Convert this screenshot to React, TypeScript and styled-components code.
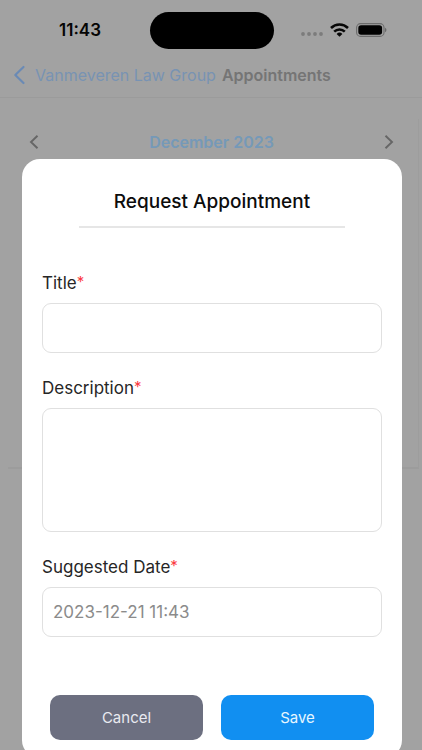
import React from "react";
import styled, { createGlobalStyle } from "styled-components";

const GlobalStyle = createGlobalStyle`
  *, *::before, *::after { box-sizing: border-box; }
  body {
    margin: 0;
    background: #a2a2a2;
    font-family: Inter, "Liberation Sans", sans-serif;
  }
  button, input, textarea { font-family: inherit; }
`;

const Screen = styled.div`
  position: relative;
  height: 100vh;
  overflow: hidden;
  background: #a2a2a2;
`;

const StatusBar = styled.header`
  display: grid;
  grid-template-columns: 1fr 124px 1fr;
  align-items: center;
  height: 54px;
  padding: 6px 0 0 2px;
`;

const Clock = styled.time`
  padding-left: 8px;
  text-align: center;
  font-size: 17px;
  line-height: 24px;
  font-weight: 600;
  color: #050505;
`;

const Island = styled.div`
  height: 37px;
  border-radius: 19px;
  background: #000;
`;

const Indicators = styled.div`
  display: flex;
  align-items: center;
  justify-content: flex-end;
  gap: 7px;
  padding-right: 35px;
`;

const NavBar = styled.nav`
  display: flex;
  align-items: center;
  gap: 6px;
  height: 44px;
  padding: 0 13px 2px;
  border-bottom: 1px solid #9b9b9b;
`;

const BackLink = styled.a`
  display: flex;
  align-items: center;
  gap: 9px;
  font-size: 16px;
  line-height: 24px;
  color: #7893b3;
  text-decoration: none;
  white-space: nowrap;
`;

const NavTitle = styled.h1`
  margin: 0;
  font-size: 16px;
  line-height: 24px;
  font-weight: 600;
  color: #757575;
`;

const CalendarCard = styled.section`
  height: 350px;
  margin: 21px 3px 0 8px;
  border-right: 1px solid #9d9d9d;
  border-bottom: 2px solid #9c9c9c;
`;

const MonthRow = styled.div`
  display: flex;
  align-items: center;
  justify-content: space-between;
  height: 46px;
  padding: 0 23px 0 20px;
`;

const MonthName = styled.h2`
  margin: 0;
  font-size: 16px;
  line-height: 24px;
  font-weight: 600;
  color: #7599b8;
`;

const IconButton = styled.button`
  display: flex;
  padding: 0;
  border: 0;
  background: none;
  color: #666;
`;

const Overlay = styled.div`
  position: absolute;
  inset: 0;
  padding: 159px 20px 0 22px;
`;

const Dialog = styled.form`
  padding: 30px 20px 18px;
  border-radius: 18px;
  background: #fff;
`;

const DialogTitle = styled.h2`
  margin: 0 37px 42px;
  padding-bottom: 11px;
  border-bottom: 2px solid #e6e6e6;
  text-align: center;
  font-size: 19px;
  line-height: 26px;
  font-weight: 500;
  color: #0c0c0c;
  white-space: nowrap;
`;

const Field = styled.div`
  display: flex;
  flex-direction: column;
  gap: 7px;
  margin-bottom: 22px;
`;

const Label = styled.label`
  font-size: 17px;
  line-height: 26px;
  color: #262626;
`;

const Required = styled.span`
  font-size: 15px;
  line-height: 15px;
  vertical-align: 2px;
  color: #fb3b42;
`;

const TextInput = styled.input`
  width: 100%;
  height: 50px;
  padding: 0 10px;
  border: 1px solid #e0e0e0;
  border-radius: 9px;
  background: #fff;
  font-size: 17px;
  color: #8b8b8b;
  outline: none;
`;

const TextArea = styled.textarea`
  width: 100%;
  height: 124px;
  padding: 10px;
  border: 1px solid #e0e0e0;
  border-radius: 9px;
  background: #fff;
  font-size: 17px;
  color: #262626;
  outline: none;
  resize: none;
`;

const Actions = styled.div`
  display: grid;
  grid-template-columns: 1fr 1fr;
  gap: 18px;
  padding: 36px 8px 0;
`;

const ActionButton = styled.button<{ $primary?: boolean }>`
  height: 45px;
  padding: 0;
  border: 0;
  border-radius: 10px;
  background: ${(p) => (p.$primary ? "#118ff1" : "#6c6f80")};
  color: ${(p) => (p.$primary ? "#e6f6ff" : "#e9eaf0")};
  font-size: 15px;
`;

const Signal = () => (
  <svg width="22" height="14" viewBox="0 0 22 14" fill="#7c7c7c" aria-hidden="true">
    <circle cx="2" cy="11" r="1.9" />
    <circle cx="8" cy="11" r="1.9" />
    <circle cx="14" cy="11" r="1.9" />
    <circle cx="20" cy="11" r="1.9" />
  </svg>
);

const Wifi = () => (
  <svg width="19" height="14" viewBox="0 0 19 14" fill="none" stroke="#080808" strokeWidth="2.6" aria-hidden="true">
    <path d="M1 5a12.2 12.2 0 0 1 17 0" />
    <path d="M4.2 8.6a7.6 7.6 0 0 1 10.6 0" />
    <path d="M9.5 13.8 6.6 10.9a4.2 4.2 0 0 1 5.8 0z" fill="#080808" stroke="none" />
  </svg>
);

const Battery = () => (
  <svg width="31" height="14" viewBox="0 0 31 14" fill="none" aria-hidden="true">
    <rect x="0.6" y="0.6" width="27.4" height="12.8" rx="4" stroke="#6c6c6c" strokeWidth="1.1" />
    <rect x="2.3" y="2.2" width="23.8" height="9.6" rx="2.8" fill="#020202" />
    <path d="M29.2 4.8c1.6.8 1.6 3.6 0 4.4z" fill="#5c5c5c" />
  </svg>
);

const BackChevron = () => (
  <svg width="13" height="20" viewBox="0 0 13 20" fill="none" stroke="#6a8ab5" strokeWidth="2.2" strokeLinecap="round" strokeLinejoin="round" aria-hidden="true">
    <path d="M10.5 2 2.3 10l8.2 8" />
  </svg>
);

const MonthChevron = ({ d }: { d: string }) => (
  <svg width="12" height="16" viewBox="0 0 12 16" fill="none" stroke="currentColor" strokeWidth="1.9" aria-hidden="true">
    <path d={d} />
  </svg>
);

export default function App() {
  return (
    <>
      <GlobalStyle />
      <Screen>
        <StatusBar>
          <Clock>11:43</Clock>
          <Island />
          <Indicators>
            <Signal />
            <Wifi />
            <Battery />
          </Indicators>
        </StatusBar>
        <NavBar>
          <BackLink href="#">
            <BackChevron />
            Vanmeveren Law Group
          </BackLink>
          <NavTitle>Appointments</NavTitle>
        </NavBar>
        <CalendarCard>
          <MonthRow>
            <IconButton type="button" aria-label="Previous month">
              <MonthChevron d="M9.5 1.7 3 8l6.5 6.3" />
            </IconButton>
            <MonthName>December 2023</MonthName>
            <IconButton type="button" aria-label="Next month">
              <MonthChevron d="M2.5 1.7 9 8l-6.5 6.3" />
            </IconButton>
          </MonthRow>
        </CalendarCard>
        <Overlay>
          <Dialog role="dialog" aria-labelledby="dialog-title" onSubmit={(e) => e.preventDefault()}>
            <DialogTitle id="dialog-title">Request Appointment</DialogTitle>
            <Field>
              <Label htmlFor="title">
                Title<Required>*</Required>
              </Label>
              <TextInput id="title" type="text" />
            </Field>
            <Field>
              <Label htmlFor="description">
                Description<Required>*</Required>
              </Label>
              <TextArea id="description" />
            </Field>
            <Field>
              <Label htmlFor="date">
                Suggested Date<Required>*</Required>
              </Label>
              <TextInput id="date" type="text" defaultValue="2023-12-21 11:43" />
            </Field>
            <Actions>
              <ActionButton type="button">Cancel</ActionButton>
              <ActionButton type="submit" $primary>
                Save
              </ActionButton>
            </Actions>
          </Dialog>
        </Overlay>
      </Screen>
    </>
  );
}
